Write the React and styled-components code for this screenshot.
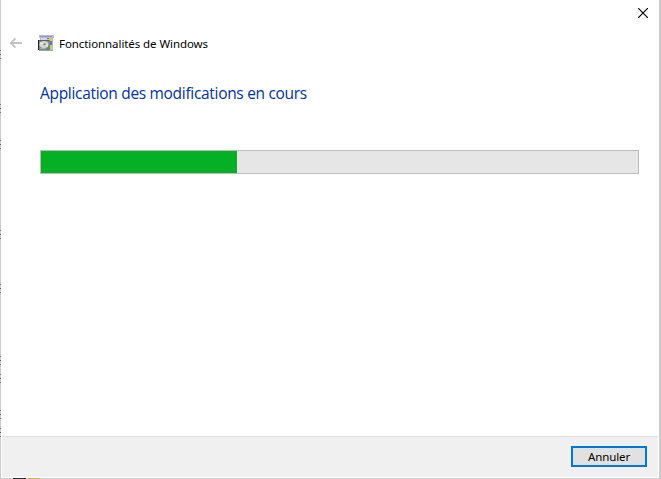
import React from "react";
import styled, { createGlobalStyle } from "styled-components";

const GlobalStyle = createGlobalStyle`
  * { box-sizing: border-box; }
  body { margin: 0; background: #fff; overflow: hidden; }
`;

const Desktop = styled.div`
  width: 661px;
  height: 479px;
  display: grid;
  grid-template-columns: 1px 658px 2px;
  grid-template-rows: 478px 1px;
  background: #cbcbcb;
  font-family: "Noto Sans", "Open Sans", sans-serif;
  color: #000;
`;

const EdgeStrip = styled.svg`
  display: block;
  width: 1px;
  height: 478px;
`;

const BottomStrip = styled.svg`
  display: block;
  grid-column: 1 / -1;
  width: 661px;
  height: 1px;
`;

const Dialog = styled.main`
  display: flex;
  flex-direction: column;
  background: #fff;
  min-width: 0;
`;

const TitleBar = styled.div`
  height: 28px;
  display: flex;
  justify-content: flex-end;
  padding: 8px 11px 0 0;
`;

const CloseButton = styled.button`
  width: 10px;
  height: 10px;
  padding: 0;
  border: 0;
  background: none;
  svg { display: block; }
`;

const Header = styled.header`
  height: 32px;
  display: flex;
  align-items: center;
  padding-left: 8px;
`;

const BackIcon = styled.svg`
  width: 14px;
  height: 12px;
  margin: 0 15px 2px 0;
`;

const AppIcon = styled.svg`
  width: 16px;
  height: 16px;
  margin-right: 5px;
  margin-top: -2px;
`;

const Title = styled.span`
  font-size: 11.5px;
  line-height: 16px;
  letter-spacing: -0.08px;
  white-space: nowrap;
`;

const Content = styled.section`
  flex: 1;
  padding: 22px 20px 0 39px;
`;

const Heading = styled.h1`
  margin: 0 0 46px;
  height: 22px;
  font-family: "Open Sans", "Noto Sans", sans-serif;
  font-size: 15.5px;
  line-height: 22px;
  font-weight: 400;
  color: #003399;
  letter-spacing: -0.31px;
  white-space: nowrap;
`;

const ProgressTrack = styled.div`
  height: 24px;
  border: 1px solid #bcbcbc;
  background: #e6e6e6;
`;

const ProgressFill = styled.div`
  height: 100%;
  background: #06b025;
`;

const Footer = styled.footer`
  height: 41px;
  margin: 0 1px 1px;
  padding: 9px 11px 0 0;
  border-top: 1px solid #dfdfdf;
  background: #f0f0f0;
  display: flex;
  justify-content: flex-end;
`;

const Button = styled.button`
  width: 76px;
  height: 21px;
  padding: 0;
  border: 2px solid #0078d7;
  background: #e1e1e1;
  font: 11.5px/17px "Noto Sans", "Open Sans", sans-serif;
  letter-spacing: -0.1px;
  color: #000;
`;

const MARKS = [50, 104, 140, 230, 284, 356, 374, 410, 428];

export default function App() {
  return (
    <>
      <GlobalStyle />
      <Desktop>
        <EdgeStrip viewBox="0 0 1 478" shapeRendering="crispEdges">
          {MARKS.map((y) => (
            <g key={y}>
              <rect x="0" y={y} width="1" height="1" fill="#777" />
              <rect x="0" y={y + 4} width="1" height="1" fill="#3c55a5" />
              <rect x="0" y={y + 8} width="1" height="1" fill="#777" />
            </g>
          ))}
        </EdgeStrip>
        <Dialog>
          <TitleBar>
            <CloseButton aria-label="Fermer">
              <svg width="10" height="10" viewBox="0 0 10 10">
                <path d="M0 0l10 10M10 0L0 10" stroke="#000" strokeWidth="1.2" />
              </svg>
            </CloseButton>
          </TitleBar>
          <Header>
            <BackIcon viewBox="0 0 14 12">
              <path d="M13 6H2M6.5 1.3L1.8 6l4.7 4.7" fill="none" stroke="#c2c2c2" strokeWidth="1.9" />
            </BackIcon>
            <AppIcon viewBox="0 0 16 16">
              <g shapeRendering="crispEdges">
                <path d="M1 0h15v3H1z" fill="#b9bbdc" />
                <path d="M2 1h12v1H2z" fill="#9094c4" />
                <path d="M2 3h13v12H2z" fill="#b4b7d4" />
                <path d="M3 3h11v2H3z" fill="#d3d6ea" />
                <path d="M9 3h5v3H9z" fill="#f0c542" />
                <path d="M9 3h2v1H9z" fill="#5d79cc" />
                <path d="M12 6h2v4h-2z" fill="#5279c4" />
                <path d="M12 10h2v4h-2z" fill="#e3c75c" />
                <path d="M0 5h12v10H0z" fill="#7c8a80" />
                <path d="M0 5h1v10H0z" fill="#222" />
                <path d="M1 5h10v1H1z" fill="#59605d" />
                <path d="M8 11h4v4H8z" fill="#5a9460" />
                <path d="M2 13h6v1H2z" fill="#a9b3aa" />
                <path d="M1 15h14v1H1z" fill="#a0a3ad" />
              </g>
              <ellipse cx="6" cy="9.5" rx="4.5" ry="3.6" fill="#d4d7d3" />
              <circle cx="6.5" cy="9.3" r="1.2" fill="#8b938c" />
              <path d="M2 8l3 .8M7.5 10.2l2.5 1" stroke="#f5f7f4" strokeWidth="1" />
            </AppIcon>
            <Title>Fonctionnalités de Windows</Title>
          </Header>
          <Content>
            <Heading>Application des modifications en cours</Heading>
            <ProgressTrack role="progressbar" aria-valuenow={33}>
              <ProgressFill style={{ width: `${(196 / 597) * 100}%` }} />
            </ProgressTrack>
          </Content>
          <Footer>
            <Button>Annuler</Button>
          </Footer>
        </Dialog>
        <div />
        <BottomStrip viewBox="0 0 661 1" shapeRendering="crispEdges">
          <rect x="13" width="13" height="1" fill="#292929" />
          <rect x="28" width="12" height="1" fill="#c8b052" />
        </BottomStrip>
      </Desktop>
    </>
  );
}
